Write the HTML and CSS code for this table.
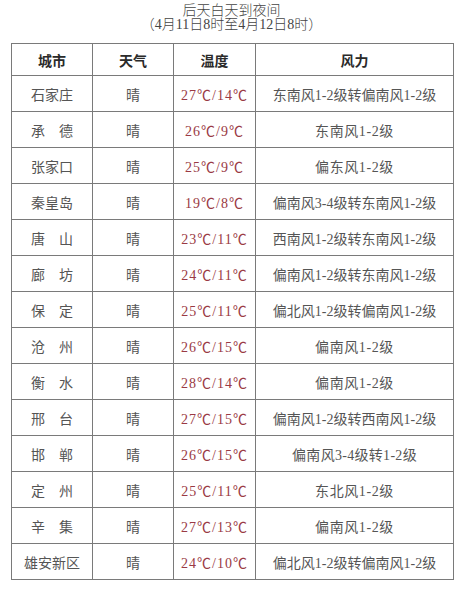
FILE: index.html
```html
<!DOCTYPE html>
<html lang="zh-CN">
<head>
<meta charset="utf-8">
<title>后天白天到夜间</title>
<link rel="stylesheet" href="styles.css">
</head>
<body>
<div class="title">
  <div class="t1">后天白天到夜间</div>
  <div class="t2">（4月11日8时至4月12日8时）</div>
</div>
<table class="wx">
  <colgroup>
    <col class="c1"><col class="c2"><col class="c3"><col class="c4">
  </colgroup>
  <thead>
    <tr><th>城市</th><th>天气</th><th>温度</th><th>风力</th></tr>
  </thead>
  <tbody>
    <tr><td>石家庄</td><td>晴</td><td class="temp">27℃/14℃</td><td class="long">东南风1-2级转偏南风1-2级</td></tr>
    <tr><td>承　德</td><td>晴</td><td class="temp">26℃/9℃</td><td class="short">东南风1-2级</td></tr>
    <tr><td>张家口</td><td>晴</td><td class="temp">25℃/9℃</td><td class="short">偏东风1-2级</td></tr>
    <tr><td>秦皇岛</td><td>晴</td><td class="temp">19℃/8℃</td><td class="long">偏南风3-4级转东南风1-2级</td></tr>
    <tr><td>唐　山</td><td>晴</td><td class="temp">23℃/11℃</td><td class="long">西南风1-2级转东南风1-2级</td></tr>
    <tr><td>廊　坊</td><td>晴</td><td class="temp">24℃/11℃</td><td class="long">偏南风1-2级转东南风1-2级</td></tr>
    <tr><td>保　定</td><td>晴</td><td class="temp">25℃/11℃</td><td class="long">偏北风1-2级转偏南风1-2级</td></tr>
    <tr><td>沧　州</td><td>晴</td><td class="temp">26℃/15℃</td><td class="short">偏南风1-2级</td></tr>
    <tr><td>衡　水</td><td>晴</td><td class="temp">28℃/14℃</td><td class="short">偏南风1-2级</td></tr>
    <tr><td>邢　台</td><td>晴</td><td class="temp">27℃/15℃</td><td class="long">偏南风1-2级转西南风1-2级</td></tr>
    <tr><td>邯　郸</td><td>晴</td><td class="temp">26℃/15℃</td><td class="mid">偏南风3-4级转1-2级</td></tr>
    <tr><td>定　州</td><td>晴</td><td class="temp">25℃/11℃</td><td class="short">东北风1-2级</td></tr>
    <tr><td>辛　集</td><td>晴</td><td class="temp">27℃/13℃</td><td class="short">偏南风1-2级</td></tr>
    <tr><td>雄安新区</td><td>晴</td><td class="temp">24℃/10℃</td><td class="long">偏北风1-2级转偏南风1-2级</td></tr>
  </tbody>
</table>
</body>
</html>
```

FILE: styles.css
```css
html, body {
  margin: 0;
  padding: 0;
  background: #ffffff;
}
body {
  font-family: "Liberation Serif", "Noto Sans CJK SC", serif;
  color: #4a4a4a;
  width: 463px;
}
.title {
  padding-top: 4px;
  text-align: center;
  font-size: 14px;
  line-height: 14px;
  color: #444;
  font-weight: 300;
}
.wx {
  margin: 11px 0 0 11px;
  width: 442px;
  border-collapse: collapse;
  table-layout: fixed;
  border: 1.5px solid #6a6a6a;
  font-size: 14px;
}
.c1 { width: 81px; }
.c2 { width: 81px; }
.c3 { width: 82px; }
.c4 { width: 198px; }
.wx th, .wx td {
  border: 1px solid #7a7a7a;
  text-align: center;
  padding: 0;
  white-space: nowrap;
  overflow: hidden;
}
.wx thead tr {
  height: 32px;
}
.wx tbody tr {
  height: 36px;
}
.wx th {
  font-weight: 700;
  color: #2a2a2a;
}
.wx td {
  font-weight: 400;
  color: #555555;
}
.wx td.temp {
  color: #9a3a44;
  letter-spacing: 1px;
}
.wx td.long {
  letter-spacing: 0;
}
.wx td.short {
  letter-spacing: 0.6px;
}
.wx td.mid {
  letter-spacing: 0.3px;
}
```
